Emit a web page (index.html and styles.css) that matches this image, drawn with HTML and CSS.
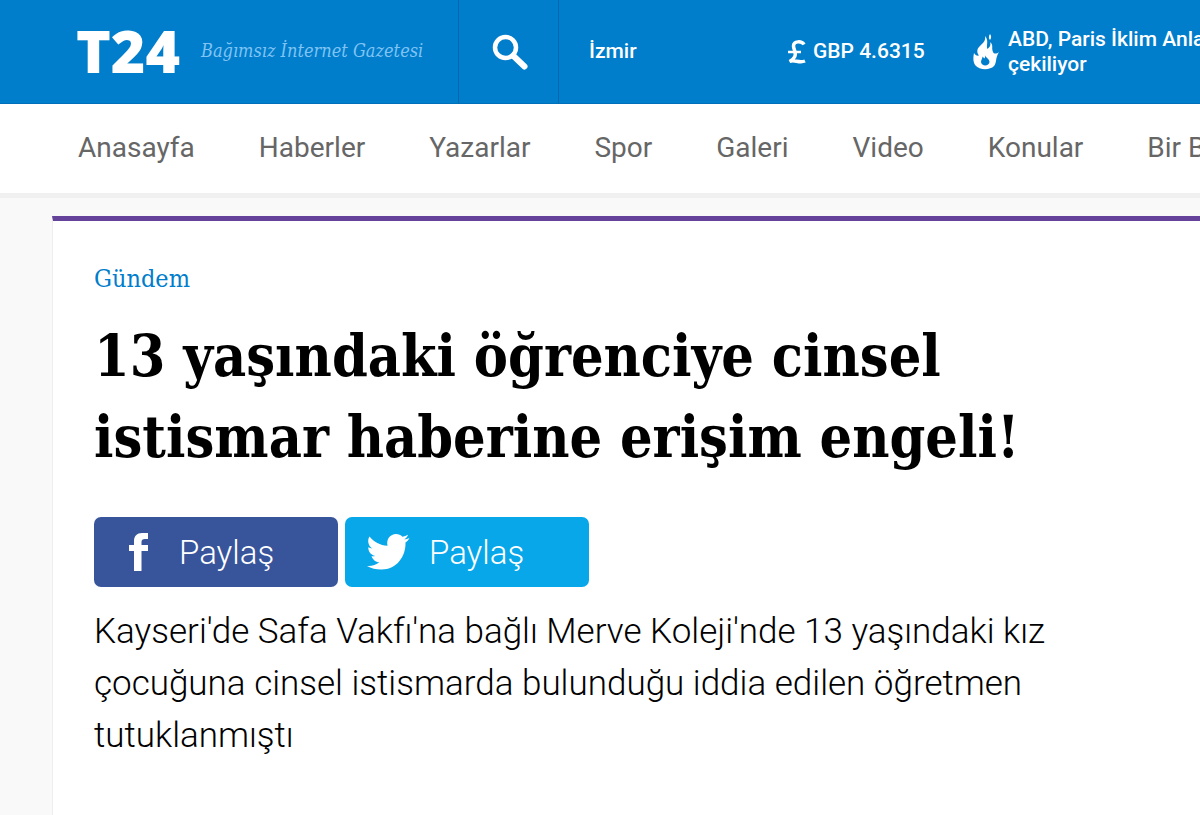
FILE: index.html
```html
<!DOCTYPE html>
<html lang="tr">
<head>
    <meta charset="UTF-8">
    <meta name="viewport" content="width=device-width, initial-scale=1.0">
    <title>T24</title>
    <link rel="stylesheet" href="styles.css">
</head>
<body>
    <header class="top-bar">
        <div class="brand">
            <a class="logo" href="#">T24</a>
            <span class="slogan">Bağımsız İnternet Gazetesi</span>
        </div>
        <button class="search" type="button" aria-label="Ara">
            <svg width="36" height="36" viewBox="0 0 36 36">
                <circle cx="13.500" cy="13.500" r="10.500" fill="none" stroke="#fff" stroke-width="4.500"/>
                <path d="M21.500 22L32.500 32.500" stroke="#fff" stroke-width="6" stroke-linecap="round"/>
            </svg>
        </button>
        <a class="city" href="#">İzmir</a>
        <div class="currency">
            <svg width="18" height="24" viewBox="0 0 18 24" fill="none" stroke="#fff" stroke-width="3.500">
                <path d="M16 4.500C14 1 5.500 0.500 5.500 6C5.500 9.500 9 13 6.500 17C5.500 19 4 20.500 1.500 21.500C6 19 11 23.500 17 21"/>
                <path d="M0 12H13" stroke-width="2.500"/>
            </svg>
            <span>GBP 4.6315</span>
        </div>
        <a class="hot-news" href="#">
            <svg width="26" height="36" viewBox="0 0 26 36">
                <path fill="#fff" d="M12 2C13 7 10 9 6 13C3.500 16 4 19 6 21.500C4 22 2 21 1 19C0 24 0 28 2.500 31.500C6 36 17 36.500 21 32C24 28.500 22 24.500 26 18C23.500 20 21 20 20 18C18 14 21 11 17 8C18 11.500 17 13 14.500 15C12.500 12 16.500 7 12 2Z"/>
                <path fill="#fff" d="M17 0C18.500 2 18.500 4 17 6C15.500 4.500 15.500 2 17 0Z"/>
                <path fill="#007dcb" d="M12 21C13 24 16.500 25 16.500 28C16 32.500 8.500 32.500 8 28C8 25.500 9.500 25 9.500 22.500C10.500 23.500 11 24 11.500 24.500C12.300 23.500 12.400 22 12 21Z"/>
            </svg>
            <span>ABD, Paris İklim Anla<br>çekiliyor</span>
        </a>
    </header>

    <nav class="main-nav">
        <a href="#">Anasayfa</a>
        <a href="#">Haberler</a>
        <a href="#">Yazarlar</a>
        <a href="#">Spor</a>
        <a href="#">Galeri</a>
        <a href="#">Video</a>
        <a href="#">Konular</a>
        <a href="#">Bir B</a>
    </nav>

    <main class="article">
        <a class="category" href="#">Gündem</a>
        <h1>13 yaşındaki öğrenciye cinsel<br>istismar haberine erişim engeli!</h1>
        <div class="share">
            <button class="share-button facebook" type="button">
                <svg width="44" height="40" viewBox="0 0 44 40">
                    <path fill="#fff" d="M18 39V19H13V13H18V9C18 4 21 1 26 1H32V7H29C26.500 7 25.500 8 25.500 10V13H32V19H25.500V39Z"/>
                </svg>
                <span>Paylaş</span>
            </button>
            <button class="share-button twitter" type="button">
                <svg width="44" height="40" viewBox="0 0 44 40">
                    <path fill="#fff" d="M43.500 6C42.500 8 41.500 9 39.500 10.500C40 24 31 37.500 15.500 37.500C10 37.500 5 36.500 1 34C6 34.300 10 33 13.500 30.300C9.500 30 6.700 27.500 5.500 24.200C6.800 24.400 8 24.300 9.200 24C5 23 2.200 19.500 2.200 15.200C3.500 16 4.800 16.300 6.200 16.400C2.200 13.500 1 8.500 3.500 4.500C8 10 14 13.400 21.500 13.700C20 7 24.500 2 30 2C32.500 2 34.800 3 36.400 4.800C38.400 4.400 40.200 3.700 42 2.700C41.300 4.800 40 6.400 38.200 7.400C40 7.200 41.800 6.700 43.500 6Z"/>
                </svg>
                <span>Paylaş</span>
            </button>
        </div>
        <p class="summary">Kayseri'de Safa Vakfı'na bağlı Merve Koleji'nde 13 yaşındaki kız çocuğuna cinsel istismarda bulunduğu iddia edilen öğretmen tutuklanmıştı</p>
    </main>
</body>
</html>
```
FILE: styles.css
```css
* {
    box-sizing: border-box;
}

body {
    display: flex;
    flex-direction: column;
    min-height: 100vh;
    margin: 0;
    font-family: Roboto, Arial, sans-serif;
    background-color: #f9f9f9;
    overflow-x: hidden;
}

a {
    color: inherit;
    text-decoration: none;
}

button {
    border: 0;
    padding: 0;
    font-family: inherit;
    color: #fff;
    cursor: pointer;
}

.top-bar {
    display: flex;
    align-items: center;
    height: 104px;
    border-bottom: 1px solid #0070b8;
    background-color: #007dcb;
    color: #fff;
    font-size: 21px;
    font-weight: 500;
    line-height: 25px;
    white-space: nowrap;
    overflow: hidden;
}

.brand {
    display: flex;
    align-items: center;
    gap: 21px;
    flex: 0 0 458px;
    padding: 0 0 3px 76px;
}

.logo {
    font-family: "Open Sans", sans-serif;
    font-size: 59px;
    font-weight: 800;
    line-height: 60px;
}

.slogan {
    font-family: "Roboto Slab", "DejaVu Serif Condensed", "DejaVu Serif", serif;
    font-size: 18px;
    font-style: italic;
    font-weight: 300;
    color: #80c4f4;
}

.search {
    display: flex;
    align-items: center;
    justify-content: center;
    flex: 0 0 101px;
    height: 100%;
    padding-left: 2px;
    border: solid #0068ae;
    border-width: 0 1px;
    background: none;
}

.city {
    flex: 0 0 229px;
    padding-left: 30px;
}

.currency {
    display: flex;
    align-items: center;
    gap: 7px;
    flex: 0 0 185px;
}

.hot-news {
    display: flex;
    align-items: center;
    gap: 9px;
}

.main-nav {
    display: flex;
    gap: 64px;
    padding: 28px 0 29px 78px;
    border-bottom: 5px solid #f0f0f0;
    background-color: #fff;
    color: #666;
    font-size: 28px;
    line-height: 32px;
    white-space: nowrap;
    overflow: hidden;
}

.article {
    flex: 1;
    margin: 18px 0 0 52px;
    padding: 40px 41px;
    border-top: 5px solid #65439a;
    border-left: 1px solid #eee;
    background-color: #fff;
}

.category {
    display: block;
    font-family: "Roboto Slab", "DejaVu Serif Condensed", "DejaVu Serif", serif;
    font-size: 25px;
    line-height: 36px;
    color: #007dcb;
}

h1 {
    margin: 18px 0 40px;
    font-family: "Roboto Slab", "DejaVu Serif Condensed", "DejaVu Serif", serif;
    font-size: 57px;
    font-weight: 700;
    line-height: 81px;
    color: #000;
    white-space: nowrap;
}

.share {
    display: flex;
    gap: 7px;
}

.share-button {
    display: flex;
    align-items: center;
    gap: 19px;
    width: 244px;
    height: 70px;
    padding-left: 22px;
    border-radius: 7px;
    font-size: 33px;
    font-weight: 300;
}

.facebook {
    background-color: #38559c;
}

.twitter {
    padding-left: 21px;
    background-color: #08a7e9;
}

.summary {
    max-width: 980px;
    margin: 19px 0 0;
    font-size: 35px;
    font-weight: 300;
    line-height: 52px;
    color: #000;
}
```
